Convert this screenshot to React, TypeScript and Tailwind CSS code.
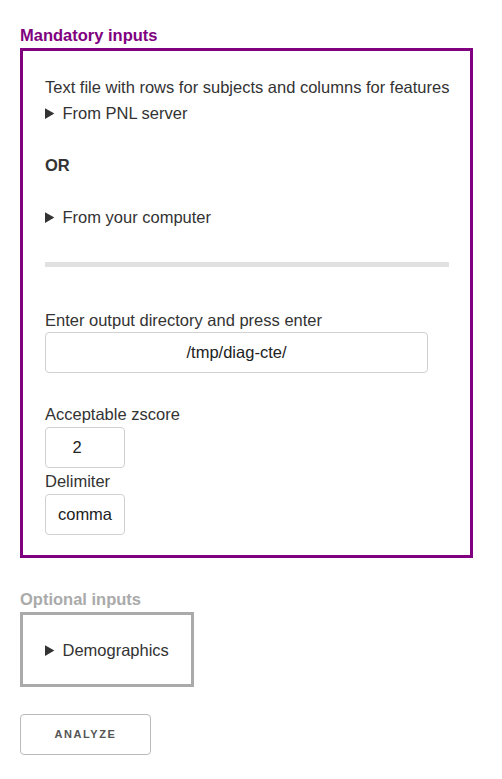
import React from 'react';

function Label({ children, className = '' }: { children: React.ReactNode; className?: string }) {
  return <div className={`leading-[26px] ${className}`}>{children}</div>;
}

export default function App() {
  return (
    <div className="min-h-screen bg-white px-5 pt-[22px] font-['Liberation_Sans',Arial,sans-serif] text-[16.5px] text-[#333]">
      <h2 className="text-[16.5px] font-bold leading-[26px] text-[#800080]">Mandatory inputs</h2>

      <div className="w-[453px] border-[3px] border-[#800080] pl-[22px] pr-[21px] pt-[23px] pb-[20px]">
        <Label className="whitespace-nowrap">Text file with rows for subjects and columns for features</Label>
        <details>
          <summary className="cursor-pointer leading-[26px]">From PNL server</summary>
        </details>
        <div className="h-[26px]" />
        <Label className="font-bold">OR</Label>
        <div className="h-[26px]" />
        <details>
          <summary className="cursor-pointer leading-[26px]">From your computer</summary>
        </details>

        <div className="mt-[32px] h-[5px] bg-[#e1e1e1]" />

        <Label className="mt-[40px]">Enter output directory and press enter</Label>
        <input
          type="text"
          defaultValue="/tmp/diag-cte/"
          className="-mt-px block h-[41px] w-[383px] rounded border border-[#d1d1d1] px-[10px] text-center text-[16.5px] text-[#222] outline-none"
        />

        <Label className="mt-[28px]">Acceptable zscore</Label>
        <input
          type="text"
          defaultValue="2"
          className="block h-[41px] w-[80px] rounded border border-[#d1d1d1] pl-[10px] pr-[26px] text-center text-[16.5px] text-[#222] outline-none"
        />

        <Label>Delimiter</Label>
        <input
          type="text"
          defaultValue="comma"
          className="block h-[41px] w-[80px] rounded border border-[#d1d1d1] px-[4px] text-center text-[16.5px] text-[#222] outline-none"
        />
      </div>

      <h2 className="mt-[28px] text-[16.5px] font-bold leading-[26px] text-[#aaa]">Optional inputs</h2>
      <div className="w-fit border-[3px] border-[#aaa] px-[22px] pt-[22px] pb-[21px]">
        <details>
          <summary className="cursor-pointer leading-[26px]">Demographics</summary>
        </details>
      </div>

      <button
        type="button"
        className="mt-[27px] block h-[41px] w-[131px] rounded border border-[#bbb] bg-transparent text-[11px] font-semibold uppercase tracking-[0.1rem] text-[#555]"
      >
        Analyze
      </button>
    </div>
  );
}
